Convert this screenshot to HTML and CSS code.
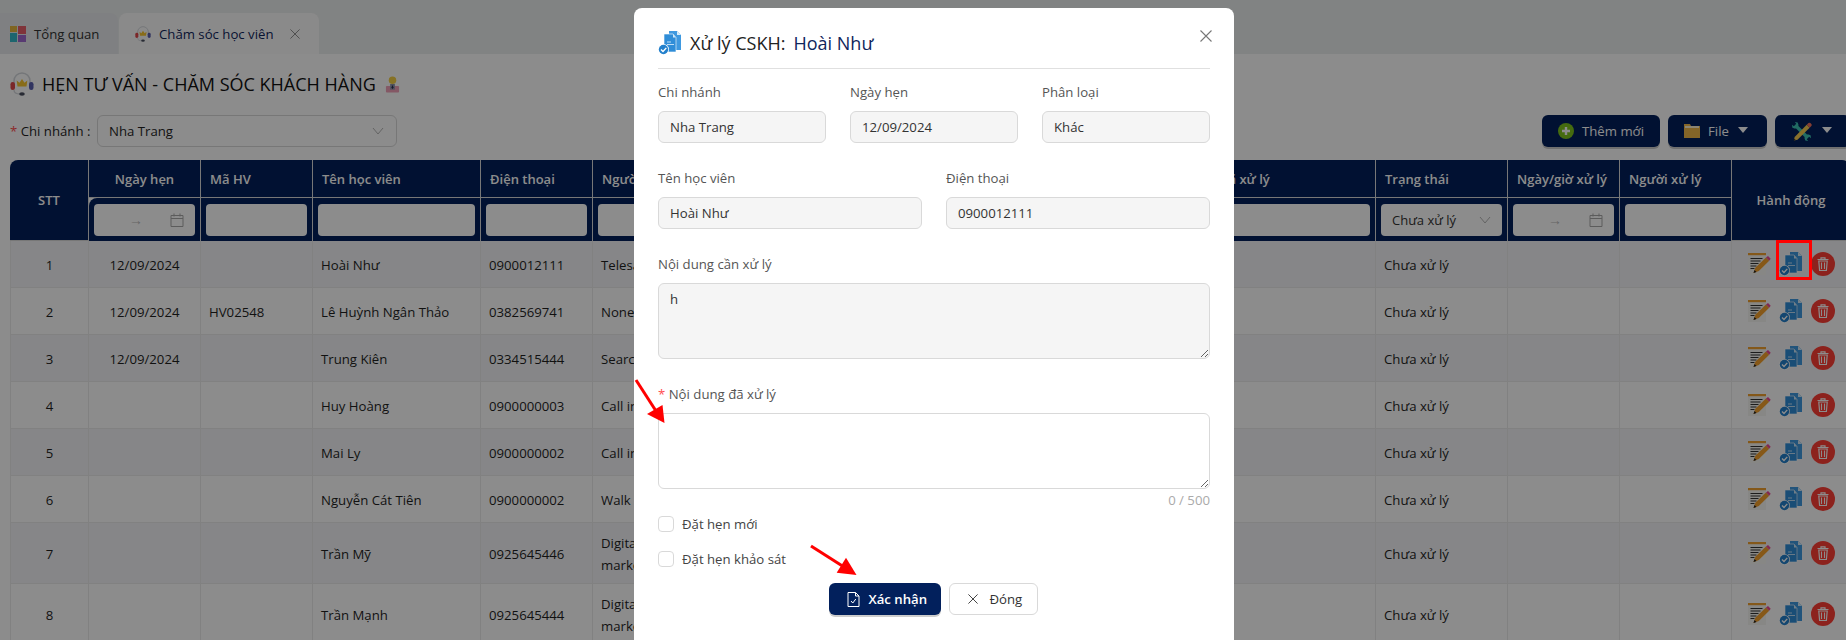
FILE: index.html
```html
<!DOCTYPE html>
<html lang="vi">
<head>
    <meta charset="UTF-8">
    <title>Chăm sóc học viên</title>
    <link rel="stylesheet" href="styles.css">
</head>
<body>

<svg class="icon-defs" aria-hidden="true">
    <symbol id="i-grid" viewBox="0 0 16 16">
        <rect x="0" y="0" width="7" height="6" fill="#e8b93f"/>
        <rect x="8" y="0" width="8" height="8" fill="#e8606a"/>
        <rect x="0" y="7" width="7" height="9" fill="#35b8c8"/>
        <rect x="8" y="9" width="8" height="7" fill="#a06ad0"/>
    </symbol>
    <symbol id="i-headset" viewBox="0 0 24 24">
        <path d="M4 12V9a8 8 0 0 1 16 0v3" fill="none" stroke="#d4d7dc" stroke-width="1.500"/>
        <rect x="0.500" y="10" width="4.500" height="8" rx="2.200" fill="#e0484c"/>
        <rect x="19" y="10" width="4.500" height="8" rx="2.200" fill="#5a5fb0"/>
        <path d="M7.500 14.500l-.8-6 2.800 2.200L12 7l2.500 3.700 2.800-2.200-.8 6z" fill="#f7c52e"/>
        <path d="M4 18c0 3.500 3 4 6 4" fill="none" stroke="#d4d7dc" stroke-width="1.300"/>
        <ellipse cx="12" cy="22" rx="2.800" ry="1.700" fill="#4a4f60"/>
    </symbol>
    <symbol id="i-person" viewBox="0 0 16 18">
        <rect x="1" y="11" width="14" height="7" rx="1" fill="#f0a0b8"/>
        <circle cx="8" cy="5" r="4" fill="#f5cf45"/>
        <rect x="5.500" y="9" width="5" height="6" fill="#8d93ad"/>
        <path d="M8 10l1 2.500-1 2-1-2z" fill="#2c3050"/>
    </symbol>
    <symbol id="i-doc" viewBox="0 0 24 24">
        <path d="M11 0h8l4 4v15h-6V6l-4-3h-2z" fill="#3f99e0"/>
        <path d="M19 0l4 4h-4z" fill="#d6ecfa"/>
        <path d="M6 3h9l3 3.500V21H6z" fill="#2f8dd8" stroke="#fff" stroke-width="0.600"/>
        <path d="M15 3l3 3.500h-3z" fill="#cfe7f8"/>
        <path d="M9 11h4M9 13.500h7" stroke="#cfe7f8" stroke-width="0.900"/>
        <circle cx="5.500" cy="18.500" r="5.500" fill="#fff"/>
        <circle cx="5.500" cy="18.500" r="4.700" fill="#2380cc"/>
        <path d="M3 18.500l2 2 3.300-3.600" fill="none" stroke="#fff" stroke-width="1.400"/>
    </symbol>
    <symbol id="i-edit" viewBox="0 0 24 24">
        <rect x="1" y="1" width="18" height="22" fill="#f6f6f2"/>
        <rect x="1" y="1" width="18" height="2.200" fill="#f0a030"/>
        <path d="M3.500 6.500h12M3.500 9h10M3.500 11.500h8M3.500 14h6M3.500 16.500h4" stroke="#333" stroke-width="1.100"/>
        <path d="M6.500 21l1.800-5.200L19 5.500l3.200 3.200L11.800 19z" fill="#f5a02c"/>
        <path d="M19 5.500l2-1.500 2.700 2.700-1.500 2z" fill="#ee4a93"/>
        <path d="M6.500 21l1-3 2 2z" fill="#222"/>
    </symbol>
    <symbol id="i-trash" viewBox="0 0 24 24">
        <circle cx="12" cy="12" r="12" fill="#ff3f35"/>
        <path d="M6.500 7.500h11M10 7.500V5.800h4v1.700" fill="none" stroke="#fff" stroke-width="1.200"/>
        <path d="M7.800 9h8.400l-.8 9.500H8.600z" fill="none" stroke="#fff" stroke-width="1.200"/>
        <path d="M10.500 10.500v6.500M13.500 10.500v6.500" stroke="#fff" stroke-width="1.100"/>
    </symbol>
    <symbol id="i-tools" viewBox="0 0 22 22">
        <path d="M5 5l12 12" stroke="#3cc4b4" stroke-width="3.500"/>
        <path d="M1 4l2 1.500L5.500 3 4 1l3 .5 1 3-3.500 3.500-3-1z" fill="#3cc4b4"/>
        <path d="M21 18l-2-1.500-2.500 2.500 1.500 2-3-.5-1-3 3.500-3.500 3 1z" fill="#3cc4b4"/>
        <path d="M3 20.500l.8-3.800L16.500 4l3 3L6.800 19.700z" fill="#f7cd50"/>
        <path d="M16.500 4l1.800-1.800a1.500 1.500 0 0 1 2 0l1 1a1.500 1.500 0 0 1 0 2L19.500 7z" fill="#f0705c"/>
        <path d="M3 20.500l.5-2 1.500 1.500z" fill="#222"/>
    </symbol>
    <symbol id="i-calendar" viewBox="0 0 14 14">
        <path d="M1 2.500h12v11H1zM1 5.500h12M4 .5v3M10 .5v3" fill="none" stroke="#a8a8a8" stroke-width="1"/>
    </symbol>
    <symbol id="i-chevron" viewBox="0 0 12 8">
        <path d="M1 1l5 6 5-6" fill="none" stroke="#b5b5b5" stroke-width="1"/>
    </symbol>
    <symbol id="i-x" viewBox="0 0 12 12">
        <path d="M.5 .5l11 11M11.500 .5l-11 11" fill="none" stroke="currentColor" stroke-width="1.100"/>
    </symbol>
</svg>

<div class="tabs">
    <div class="tab">
        <svg class="tab-icon"><use href="#i-grid"/></svg>
        <span>Tổng quan</span>
    </div>
    <div class="tab tab-active">
        <svg class="tab-icon"><use href="#i-headset"/></svg>
        <span>Chăm sóc học viên</span>
        <svg class="tab-close"><use href="#i-x"/></svg>
    </div>
</div>

<div class="page">
    <h1 class="page-title">
        <svg class="title-icon"><use href="#i-headset"/></svg>
        <span>HẸN TƯ VẤN - CHĂM SÓC KHÁCH HÀNG</span>
        <svg class="title-person"><use href="#i-person"/></svg>
    </h1>

    <div class="toolbar">
        <div class="branch">
            <label><span class="req">*</span> Chi nhánh :</label>
            <div class="select">
                <span>Nha Trang</span>
                <svg class="chevron"><use href="#i-chevron"/></svg>
            </div>
        </div>
        <div class="actions">
            <button class="btn-navy btn-add">
                <svg width="16" height="16" viewBox="0 0 16 16">
                    <circle cx="8" cy="8" r="8" fill="#7fc41c"/>
                    <path d="M8 4v8M4 8h8" stroke="#fff" stroke-width="2.400"/>
                </svg>
                Thêm mới
            </button>
            <button class="btn-navy btn-file">
                <svg width="16" height="16" viewBox="0 0 16 16">
                    <path d="M0 1h6l1 2h9v12H0z" fill="#f0b84a"/>
                    <rect x="1" y="3" width="14" height="2" fill="#fff3d0"/>
                </svg>
                File
                <span class="caret"></span>
            </button>
            <button class="btn-navy btn-tools">
                <svg width="21" height="21"><use href="#i-tools"/></svg>
                <span class="caret"></span>
            </button>
        </div>
    </div>

    <table class="grid">
        <colgroup>
            <col class="c-stt"><col class="c-112"><col class="c-112"><col class="c-168"><col class="c-112"><col class="c-112">
            <col class="c-446"><col class="c-225"><col class="c-132"><col class="c-112"><col class="c-112"><col class="c-118">
        </colgroup>
        <thead>
            <tr class="head-top">
                <th rowspan="2" class="center">STT</th>
                <th class="center">Ngày hẹn</th>
                <th>Mã HV</th>
                <th>Tên học viên</th>
                <th>Điện thoại</th>
                <th>Người tạo</th>
                <th>Nội dung cần xử lý</th>
                <th>Nội dung đã xử lý</th>
                <th>Trạng thái</th>
                <th>Ngày/giờ xử lý</th>
                <th>Người xử lý</th>
                <th rowspan="2" class="center">Hành động</th>
            </tr>
            <tr class="head-filter">
                <th><div class="filter filter-date"><span class="arrow">→</span><svg class="cal"><use href="#i-calendar"/></svg></div></th>
                <th><div class="filter"></div></th>
                <th><div class="filter"></div></th>
                <th><div class="filter"></div></th>
                <th><div class="filter"></div></th>
                <th><div class="filter"></div></th>
                <th><div class="filter"></div></th>
                <th><div class="filter filter-select"><span>Chưa xử lý</span><svg class="chevron"><use href="#i-chevron"/></svg></div></th>
                <th><div class="filter filter-date"><span class="arrow">→</span><svg class="cal"><use href="#i-calendar"/></svg></div></th>
                <th><div class="filter"></div></th>
            </tr>
        </thead>
        <tbody>
            <tr>
                <td class="center">1</td><td class="center">12/09/2024</td><td></td><td>Hoài Như</td><td>0900012111</td><td>Telesale</td><td></td><td></td><td>Chưa xử lý</td><td></td><td></td>
                <td><div class="row-actions"><svg><use href="#i-edit"/></svg><svg><use href="#i-doc"/></svg><svg><use href="#i-trash"/></svg></div></td>
            </tr>
            <tr>
                <td class="center">2</td><td class="center">12/09/2024</td><td>HV02548</td><td>Lê Huỳnh Ngân Thảo</td><td>0382569741</td><td>None</td><td></td><td></td><td>Chưa xử lý</td><td></td><td></td>
                <td><div class="row-actions"><svg><use href="#i-edit"/></svg><svg><use href="#i-doc"/></svg><svg><use href="#i-trash"/></svg></div></td>
            </tr>
            <tr>
                <td class="center">3</td><td class="center">12/09/2024</td><td></td><td>Trung Kiên</td><td>0334515444</td><td>Search</td><td></td><td></td><td>Chưa xử lý</td><td></td><td></td>
                <td><div class="row-actions"><svg><use href="#i-edit"/></svg><svg><use href="#i-doc"/></svg><svg><use href="#i-trash"/></svg></div></td>
            </tr>
            <tr>
                <td class="center">4</td><td></td><td></td><td>Huy Hoàng</td><td>0900000003</td><td>Call in</td><td></td><td></td><td>Chưa xử lý</td><td></td><td></td>
                <td><div class="row-actions"><svg><use href="#i-edit"/></svg><svg><use href="#i-doc"/></svg><svg><use href="#i-trash"/></svg></div></td>
            </tr>
            <tr>
                <td class="center">5</td><td></td><td></td><td>Mai Ly</td><td>0900000002</td><td>Call in</td><td></td><td></td><td>Chưa xử lý</td><td></td><td></td>
                <td><div class="row-actions"><svg><use href="#i-edit"/></svg><svg><use href="#i-doc"/></svg><svg><use href="#i-trash"/></svg></div></td>
            </tr>
            <tr>
                <td class="center">6</td><td></td><td></td><td>Nguyễn Cát Tiên</td><td>0900000002</td><td>Walk in</td><td></td><td></td><td>Chưa xử lý</td><td></td><td></td>
                <td><div class="row-actions"><svg><use href="#i-edit"/></svg><svg><use href="#i-doc"/></svg><svg><use href="#i-trash"/></svg></div></td>
            </tr>
            <tr>
                <td class="center">7</td><td></td><td></td><td>Trần Mỹ</td><td>0925645446</td><td>Digital marketing</td><td></td><td></td><td>Chưa xử lý</td><td></td><td></td>
                <td><div class="row-actions"><svg><use href="#i-edit"/></svg><svg><use href="#i-doc"/></svg><svg><use href="#i-trash"/></svg></div></td>
            </tr>
            <tr>
                <td class="center">8</td><td></td><td></td><td>Trần Mạnh</td><td>0925645444</td><td>Digital marketing</td><td></td><td></td><td>Chưa xử lý</td><td></td><td></td>
                <td><div class="row-actions"><svg><use href="#i-edit"/></svg><svg><use href="#i-doc"/></svg><svg><use href="#i-trash"/></svg></div></td>
            </tr>
        </tbody>
    </table>
</div>

<div class="overlay"></div>

<!-- Hộp thoại xử lý -->
<div class="modal">
    <div class="modal-head">
        <svg class="modal-icon"><use href="#i-doc"/></svg>
        <span>Xử lý CSKH:</span>
        <span class="modal-name">Hoài Như</span>
        <svg class="modal-close"><use href="#i-x"/></svg>
    </div>

    <div class="form-row cols-3">
        <div class="field"><label>Chi nhánh</label><input type="text" value="Nha Trang" disabled></div>
        <div class="field"><label>Ngày hẹn</label><input type="text" value="12/09/2024" disabled></div>
        <div class="field"><label>Phân loại</label><input type="text" value="Khác" disabled></div>
    </div>
    <div class="form-row cols-2">
        <div class="field"><label>Tên học viên</label><input type="text" value="Hoài Như" disabled></div>
        <div class="field"><label>Điện thoại</label><input type="text" value="0900012111" disabled></div>
    </div>
    <div class="form-row">
        <div class="field"><label>Nội dung cần xử lý</label><textarea disabled>h</textarea></div>
    </div>
    <div class="form-row form-row-count">
        <div class="field">
            <label><span class="req">*</span> Nội dung đã xử lý</label>
            <textarea></textarea>
            <div class="count">0 / 500</div>
        </div>
    </div>

    <label class="check"><input type="checkbox"> Đặt hẹn mới</label>
    <label class="check"><input type="checkbox"> Đặt hẹn khảo sát</label>

    <div class="modal-foot">
        <button class="btn-navy btn-confirm">
            <svg width="13" height="15" viewBox="0 0 13 15">
                <path d="M1 .5h7.500l3.500 3.500v10.500H1zM8.500 .5V4H12" fill="none" stroke="#fff"/>
                <path d="M4 9l1.800 2 3-4" fill="none" stroke="#fff"/>
            </svg>
            Xác nhận
        </button>
        <button class="btn-close"><svg class="close-x"><use href="#i-x"/></svg> Đóng</button>
    </div>
</div>

<!-- Ghi chú đỏ vẽ đè lên ảnh -->
<div class="mark-box"></div>
<svg class="mark-arrow arrow-field" width="36" height="48" viewBox="0 0 36 48">
    <path d="M2 2L22 33" stroke="#f00" stroke-width="3"/>
    <path d="M30.500 45L13 36 28.500 27z" fill="#f00"/>
</svg>
<svg class="mark-arrow arrow-submit" width="50" height="34" viewBox="0 0 50 34">
    <path d="M2 2L35 23" stroke="#f00" stroke-width="3"/>
    <path d="M47.500 31L27.700 28.700 37 13.700z" fill="#f00"/>
</svg>

</body>
</html>
```

FILE: styles.css
```css
* {
    box-sizing: border-box;
}
html, body {
    margin: 0;
    height: 640px;
    overflow: hidden;
}
body {
    position: relative;
    width: 1846px;
    background: #fff;
    font-family: "Open Sans", "Noto Sans", sans-serif;
    font-size: 13.200px;
    line-height: 22px;
    color: #1f1f1f;
}
.icon-defs {
    position: absolute;
    width: 0;
    height: 0;
}
.req {
    color: #ff4d4f;
}

/* Tabs */
.tabs {
    display: flex;
    height: 54px;
    padding-top: 13px;
    background: #eceeee;
}
.tab {
    display: flex;
    align-items: center;
    gap: 8px;
    width: 118px;
    margin-right: 1px;
    padding-left: 10px;
    background: #e7eaed;
    border-radius: 0 8px 0 0;
    color: #333;
}
.tab-active {
    width: 200px;
    padding-left: 16px;
    background: #fcfcfc;
    border-radius: 8px 8px 0 0;
    color: #10265c;
}
.tab-icon {
    width: 16px;
    height: 16px;
}
.tab-close {
    width: 10px;
    height: 10px;
    margin-left: 8px;
    color: #888;
}

/* Page */
.page {
    width: 1850px;
    padding-left: 10px;
}
.page-title {
    display: flex;
    align-items: center;
    height: 24px;
    margin: 18px 0 0;
    font-size: 18px;
    font-weight: 400;
    color: #111;
}
.title-icon {
    width: 24px;
    height: 24px;
    margin-right: 8px;
}
.title-person {
    width: 15px;
    height: 18px;
    margin-left: 9px;
}
.toolbar {
    display: flex;
    justify-content: space-between;
    height: 35px;
    margin-top: 19px;
    margin-bottom: 10px;
}
.branch {
    display: flex;
    align-items: center;
    justify-content: space-between;
    width: 387px;
    height: 32px;
}
.select {
    display: flex;
    align-items: center;
    justify-content: space-between;
    width: 300px;
    height: 32px;
    padding: 0 12px 0 11px;
    border: 1px solid #d9d9d9;
    border-radius: 6px;
}
.chevron {
    width: 12px;
    height: 8px;
}
.actions {
    display: flex;
    gap: 8px;
}
.btn-navy {
    display: flex;
    align-items: center;
    height: 32px;
    border: none;
    border-radius: 6px;
    background: #02205c;
    box-shadow: 0 2px 0 rgba(0, 0, 0, 0.2);
    color: #fff;
    font-family: inherit;
    font-size: 13.200px;
}
.btn-add {
    width: 118px;
    padding-left: 16px;
    gap: 8px;
}
.btn-file {
    width: 99px;
    padding-left: 16px;
    gap: 8px;
}
.btn-tools {
    width: 75px;
    padding-left: 16px;
    gap: 9px;
}
.caret {
    display: inline-block;
    margin-left: 1px;
    margin-bottom: 3px;
    border-left: 5px solid transparent;
    border-right: 5px solid transparent;
    border-top: 6px solid #fff;
}

/* Table */
.grid {
    width: 1840px;
    table-layout: fixed;
    border-collapse: separate;
    border-spacing: 0;
}
.c-stt { width: 79px; }
.c-112 { width: 112px; }
.c-168 { width: 168px; }
.c-446 { width: 446px; }
.c-225 { width: 225px; }
.c-132 { width: 132px; }
.c-118 { width: 118px; }
.grid th {
    padding: 0 9px;
    background: #02205c;
    border-right: 1px solid #d9d9d9;
    color: #fff;
    font-weight: 600;
    font-size: 13px;
    text-align: left;
}
.grid th.center,
.grid td.center {
    text-align: center;
}
.grid thead tr th:first-child {
    border-top-left-radius: 8px;
}
.grid thead tr:first-child th:last-child {
    border-right: none;
    border-top-right-radius: 8px;
}
.head-top th {
    height: 38px;
    border-bottom: 1px solid #d9d9d9;
}
.head-filter th {
    height: 43px;
    padding: 0 5px;
}
.filter {
    display: flex;
    align-items: center;
    height: 32px;
    padding: 0 11px;
    background: #fff;
    border-radius: 4px;
    color: #333;
    font-weight: 400;
}
.filter-date {
    justify-content: flex-end;
    gap: 27px;
}
.filter-date .arrow {
    color: #bbb;
    font-size: 14px;
}
.cal {
    width: 14px;
    height: 14px;
}
.filter-select {
    justify-content: space-between;
}
.grid td {
    height: 47px;
    padding: 9px 8px 7px;
    border-right: 1px solid #ececec;
    border-bottom: 1px solid #ececec;
}
.grid td:first-child {
    border-left: 1px solid #ececec;
}
.grid tbody tr:nth-child(odd) td {
    background: #f4f5f7;
}
.row-actions {
    display: flex;
    align-items: center;
    gap: 8px;
    margin-left: 7px;
    margin-top: -2px;
}
.row-actions svg {
    flex: none;
    width: 24px;
    height: 24px;
}

/* Modal */
.overlay {
    position: absolute;
    inset: 0;
    background: rgba(0, 0, 0, 0.45);
}
.modal {
    position: absolute;
    left: 634px;
    top: 8px;
    width: 600px;
    height: 680px;
    padding: 22px 24px 0;
    background: #fff;
    border-radius: 8px;
}
.modal-head {
    display: flex;
    align-items: center;
    height: 39px;
    padding-bottom: 12px;
    margin-bottom: 12px;
    border-bottom: 1px solid #e0e0e0;
    font-size: 18px;
    color: #222;
}
.modal-icon {
    width: 24px;
    height: 24px;
    margin-right: 8px;
}
.modal-name {
    margin-left: 8px;
    color: #10265c;
}
.modal-close {
    width: 12px;
    height: 12px;
    margin-left: auto;
    margin-right: -2px;
    margin-top: -14px;
    color: #777;
}
.form-row {
    display: grid;
    gap: 24px;
    margin-bottom: 24px;
}
.cols-3 {
    grid-template-columns: repeat(3, 1fr);
}
.cols-2 {
    grid-template-columns: repeat(2, 1fr);
}
.field label {
    display: block;
    margin-bottom: 8px;
    color: #555;
}
.field input,
.field textarea {
    display: block;
    width: 100%;
    padding: 4px 11px;
    border: 1px solid #d9d9d9;
    border-radius: 6px;
    font-family: inherit;
    font-size: 13.200px;
    line-height: 22px;
    color: #333;
    background: #fff;
}
.field input {
    height: 32px;
}
.field textarea {
    height: 76px;
    resize: vertical;
}
.field input:disabled,
.field textarea:disabled {
    background: #f5f5f5;
    color: #333;
}
.form-row-count {
    margin-bottom: 2px;
}
.count {
    text-align: right;
    color: #aaa;
}
.check {
    display: flex;
    align-items: center;
    gap: 8px;
    height: 22px;
    margin-bottom: 13px;
    color: #444;
}
.check input {
    appearance: none;
    width: 16px;
    height: 16px;
    margin: 0;
    background: #fff;
    border: 1px solid #d9d9d9;
    border-radius: 4px;
}
.modal-foot {
    display: flex;
    justify-content: center;
    gap: 8px;
    padding-right: 2px;
}
.btn-confirm {
    width: 112px;
    padding-left: 18px;
    gap: 9px;
    font-weight: 600;
}
.btn-close {
    display: flex;
    align-items: center;
    gap: 12px;
    width: 89px;
    height: 32px;
    padding-left: 18px;
    background: #fff;
    border: 1px solid #d9d9d9;
    border-radius: 6px;
    font-family: inherit;
    font-size: 13.200px;
    color: #333;
}
.close-x {
    width: 10px;
    height: 10px;
}

/* Annotations */
.mark-box {
    position: absolute;
    left: 1776px;
    top: 240px;
    width: 36px;
    height: 40px;
    border: 3px solid #f00;
}
.mark-arrow {
    position: absolute;
}
.arrow-field {
    left: 634px;
    top: 378px;
}
.arrow-submit {
    left: 809px;
    top: 544px;
}
```
